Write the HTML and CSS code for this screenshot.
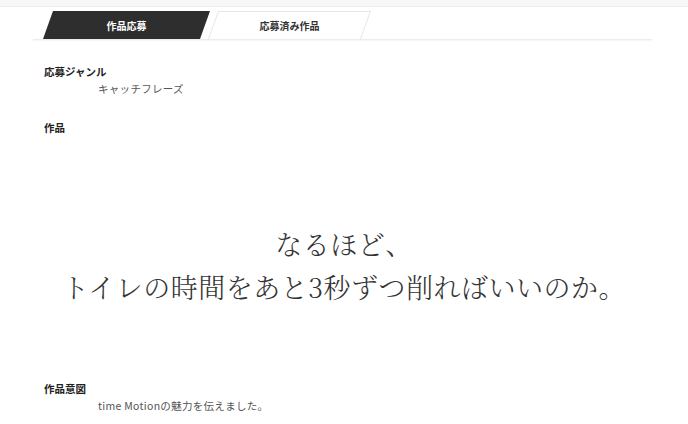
FILE: index.html
```html
<!DOCTYPE html>
<html lang="ja">
<head>
<meta charset="utf-8">
<link rel="stylesheet" href="styles.css">
</head>
<body>
<div class="topband"></div>
<nav class="tabs">
  <div class="tab tab-active">作品応募</div>
  <div class="tab tab-plain">応募済み作品</div>
</nav>
<main class="content">
  <section class="field">
    <h3 class="label">応募ジャンル</h3>
    <p class="value">キャッチフレーズ</p>
  </section>
  <section class="field">
    <h3 class="label">作品</h3>
    <div class="work">
      <p>なるほど、</p>
      <p>トイレの時間をあと3秒ずつ削ればいいのか。</p>
    </div>
  </section>
  <section class="field">
    <h3 class="label">作品意図</h3>
    <p class="value">time Motionの魅力を伝えました。</p>
  </section>
</main>
</body>
</html>
```
FILE: styles.css
```css
* { box-sizing: border-box; }
html, body { margin: 0; padding: 0; background: #fff; }
body {
  font-family: "Noto Sans CJK JP", "Noto Sans", sans-serif;
  color: #333;
}
.topband {
  height: 7px;
  background: #f7f7f7;
  border-bottom: 1px solid #ececec;
}
.tabs {
  display: flex;
  margin: 4px 36px 0 33px;
  padding-left: 15px;
  height: 29px;
  border-bottom: 1px solid #ececec;
  box-shadow: 0 1px 1px rgba(0,0,0,0.03);
}
.tab {
  position: relative;
  height: 28px;
  display: flex;
  align-items: center;
  justify-content: center;
  font-size: 10px;
  font-weight: bold;
  z-index: 0;
}
.tab::before {
  content: "";
  position: absolute;
  inset: 0;
  transform: skewX(-19.6deg);
  z-index: -1;
}
.tab-active {
  width: 157px;
  color: #fff;
}
.tab-active::before { background: #2e2e2e; }
.tab-plain {
  width: 153px;
  margin-left: 8px;
  color: #333;
}
.tab-plain::before {
  background: #fff;
  border: 1px solid #e6e6e6;
  border-bottom: none;
}
.content {
  padding: 0 44px;
}
.field { margin: 0; }
.label {
  margin: 0;
  font-size: 10.5px;
  font-weight: bold;
  line-height: 16px;
  color: #222;
}
.field:first-child .label { margin-top: 24px; }
.field:nth-child(2) .label { margin-top: 22px; }
.field:nth-child(3) .label { margin-top: 0; }
.value {
  margin: 0;
  padding-left: 54px;
  font-size: 10.5px;
  line-height: 18px;
  color: #555;
  letter-spacing: 0.3px;
}
.work {
  padding: 86px 0 73px;
  text-align: center;
  font-family: "Noto Serif CJK JP", "Liberation Serif", "Noto Sans CJK JP", serif;
  font-weight: 300;
  font-size: 27px;
  letter-spacing: 0.5px;
  line-height: 43px;
  color: #333;
}
.work p { margin: 0; }
```
